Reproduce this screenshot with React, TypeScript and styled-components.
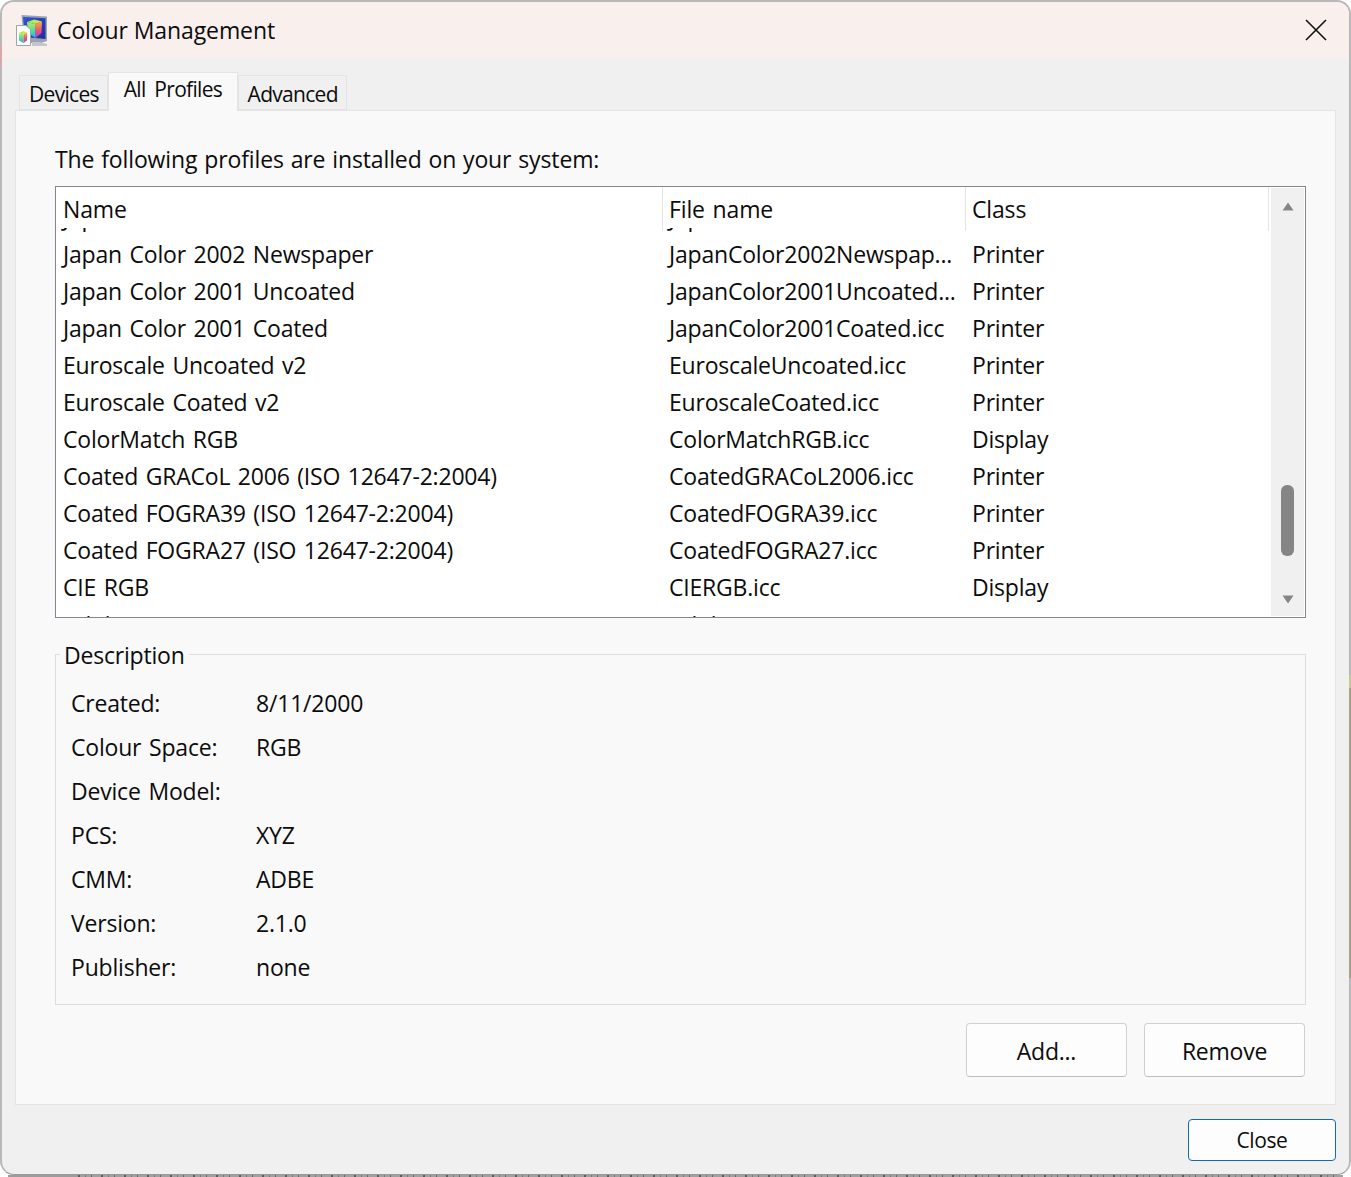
import React from "react";
import styled, { createGlobalStyle } from "styled-components";

const Global = createGlobalStyle`
  html, body { margin: 0; padding: 0; background: #fff; }
  body { font-family: "Open Sans", "Noto Sans", "Liberation Sans", sans-serif; color: #0c0c0c; }
  * { box-sizing: border-box; }
`;

const Stage = styled.div`
  width: 1351px;
  height: 1177px;
  overflow: hidden;
  background: #fff;
  position: relative;
  display: flex;
  flex-direction: column;
`;

const Window = styled.div`
  width: 1351px;
  height: 1175px;
  flex: none;
  border: 2px solid #b8b8b8;
  border-bottom: 1px solid #9a9a9a;
  border-radius: 14px;
  background: #f0f0f0;
  overflow: hidden;
  display: flex;
  flex-direction: column;
`;

const BehindStrip = styled.div`
  height: 2px;
  flex: none;
  margin: 0 8px;
  background:
    repeating-linear-gradient(90deg, #5c5c5c 0 2px, #a0a0a0 2px 7px, #7a7a7a 7px 8px, #a0a0a0 8px 13px, #666 13px 14px, #a0a0a0 14px 23px)
      70px 0 no-repeat,
    #9c9c9c;
`;

const EdgeMark = styled.div<{ $x: number; $y: number; $h: number; $c: string }>`
  position: absolute;
  left: ${(p) => p.$x}px;
  top: ${(p) => p.$y}px;
  width: 2px;
  height: ${(p) => p.$h}px;
  background: ${(p) => p.$c};
`;

const TitleBar = styled.div`
  height: 56px;
  flex: none;
  background: #f9f0ed;
  display: flex;
  align-items: center;
  padding: 0 22px 0 13px;
  gap: 9px;
`;

const TitleText = styled.div`
  font-size: 23px;
  letter-spacing: -0.1px;
  flex: 1;
`;

const CloseX = styled.button`
  width: 22px;
  height: 22px;
  padding: 0;
  border: 0;
  background: none;
  display: flex;
`;

const TabRow = styled.div`
  height: 52px;
  flex: none;
  display: flex;
  align-items: flex-end;
  padding-left: 17px;
  position: relative;
  z-index: 1;
`;

const Tab = styled.div<{ $active?: boolean }>`
  height: ${(p) => (p.$active ? "39px" : "35px")};
  padding: ${(p) => (p.$active ? "0 14.5px 6px 15px" : "2px 8px 0 9px")};
  margin-bottom: ${(p) => (p.$active ? "-1px" : "0")};
  background: ${(p) => (p.$active ? "#f9f9f9" : "#f0f0f0")};
  border: 1px solid #e4e4e4;
  border-bottom: ${(p) => (p.$active ? "0" : "1px solid #e4e4e4")};
  display: flex;
  align-items: center;
  font-size: 21px;
  letter-spacing: -0.7px;
  word-spacing: 4px;
`;

const Panel = styled.div`
  margin: 0 13px 0 13px;
  height: 995px;
  flex: none;
  background: #f9f9f9;
  border: 1px solid #e4e4e4;
  padding: 0 29px 0 39px;
  display: flex;
  flex-direction: column;
`;

const Intro = styled.div`
  height: 75px;
  flex: none;
  font-size: 23px;
  letter-spacing: -0.12px;
  word-spacing: 1px;
  line-height: 31px;
  padding-top: 33px;
`;

const ListBox = styled.div`
  height: 432px;
  flex: none;
  background: #fff;
  border: 1px solid #828790;
  display: flex;
  position: relative;
  overflow: hidden;
`;

const ListMain = styled.div`
  flex: 1;
  min-width: 0;
  display: flex;
  flex-direction: column;
`;

const HeaderRow = styled.div`
  height: 41px;
  flex: none;
  display: grid;
  grid-template-columns: 607px 303px 303px;
  background: #fff;
  position: relative;
  z-index: 1;
`;

const HeaderCell = styled.div<{ $first?: boolean }>`
  padding-left: ${(p) => (p.$first ? "7px" : "6px")};
  font-size: 23px;
  line-height: 44px;
  border-right: 1px solid #e5e5e5;
  letter-spacing: -0.15px;
  word-spacing: 2px;
`;

const RowsClip = styled.div`
  flex: 1;
  overflow: hidden;
`;

const Rows = styled.div`
  margin-top: -29px;
`;

const Row = styled.div`
  height: 37px;
  display: grid;
  grid-template-columns: 606px 303px 1fr;
  align-items: center;

  &:last-child {
    transform: translateY(1px);
  }
`;

const Cell = styled.div`
  padding-left: 7px;
  font-size: 23px;
  line-height: 37px;
  white-space: nowrap;
  letter-spacing: -0.2px;
  word-spacing: 1.8px;
`;

const ScrollBar = styled.div`
  width: 33px;
  flex: none;
  margin: 1px 1px 1px 0;
  background: #f0f0f0;
  position: relative;
`;

const Arrow = styled.svg<{ $top: number }>`
  position: absolute;
  left: 11px;
  top: ${(p) => p.$top}px;
`;

const Thumb = styled.div`
  position: absolute;
  left: 10px;
  top: 297px;
  width: 13px;
  height: 71px;
  border-radius: 6px;
  background: #858585;
`;

const Group = styled.div`
  margin-top: 36px;
  height: 351px;
  flex: none;
  border: 1px solid #dcdcdc;
  position: relative;
  padding: 26px 0 0 15px;
`;

const Legend = styled.div`
  position: absolute;
  left: 4px;
  top: -15px;
  padding: 0 4px;
  background: #f9f9f9;
  font-size: 23px;
  line-height: 30px;
  letter-spacing: -0.2px;
`;

const DescRow = styled.div`
  height: 44px;
  display: grid;
  grid-template-columns: 185px 1fr;
  align-items: center;
  font-size: 23px;
  letter-spacing: -0.2px;
  word-spacing: 2px;
`;

const PanelActions = styled.div`
  margin-top: 18px;
  display: flex;
  justify-content: flex-end;
  gap: 17px;
  padding-right: 1px;
`;

const ActionBtn = styled.button`
  width: 161px;
  height: 54px;
  background: #fdfdfd;
  border: 1px solid #d0d0d0;
  border-bottom-color: #bdbdbd;
  border-radius: 4px;
  font: inherit;
  font-size: 23px;
  letter-spacing: -0.25px;
  color: #0c0c0c;
  padding: 2px 0 0;
`;

const Footer = styled.div`
  flex: 1;
  display: flex;
  justify-content: flex-end;
  align-items: flex-start;
  padding: 14px 13px 0 0;
`;

const CloseBtn = styled.button`
  width: 148px;
  height: 42px;
  background: #fdfdfd;
  border: 1.5px solid #0f6cb0;
  border-radius: 4px;
  font: inherit;
  font-size: 21px;
  letter-spacing: -0.4px;
  color: #0c0c0c;
  padding: 0;
`;

const AppIcon = () => (
  <svg width="33" height="33" viewBox="0 0 33 33" aria-hidden="true">
    <defs>
      <linearGradient id="scr" x1="0" y1="0" x2="1" y2="1">
        <stop offset="0" stopColor="#2f55d8" />
        <stop offset="1" stopColor="#1a2f9c" />
      </linearGradient>
      <linearGradient id="top" x1="0" y1="0" x2="1" y2="0">
        <stop offset="0" stopColor="#8ee65a" />
        <stop offset="1" stopColor="#f4e24a" />
      </linearGradient>
      <linearGradient id="right" x1="0" y1="0" x2="0" y2="1">
        <stop offset="0" stopColor="#f7b23c" />
        <stop offset="0.55" stopColor="#f0507a" />
        <stop offset="1" stopColor="#b53ed0" />
      </linearGradient>
      <linearGradient id="left" x1="0" y1="0" x2="0" y2="1">
        <stop offset="0" stopColor="#b8ee58" />
        <stop offset="0.55" stopColor="#48e0a0" />
        <stop offset="1" stopColor="#36a8e8" />
      </linearGradient>
    </defs>
    <path d="M6.5 1 32 2.5 V27 L26 29 H9 Z" fill="#9aa3b4" />
    <path d="M8 3 30.5 4.2 V25 L10 23 Z" fill="url(#scr)" />
    <path d="M24 28 32 30 V32 H17 V28 Z" fill="#c3c6cc" />
    <path d="M12 8 19 5.5 27 7.5 20 10 Z" fill="url(#top)" />
    <path d="M20 10 27 7.5 26.5 19 20.5 24 Z" fill="url(#right)" />
    <path d="M12 8 20 10 20.5 24 13 19 Z" fill="url(#left)" />
    <path d="M1.5 11.5 H11 L15.5 15.5 V31.5 H1.5 Z" fill="#fdfdfd" stroke="#9fa3aa" />
    <path d="M4 19 8 17 12 18.5 8.5 20.5 Z" fill="url(#top)" />
    <path d="M4 19 8.5 20.5 V29 L4 26.5 Z" fill="url(#left)" />
    <path d="M8.5 20.5 12 18.5 V26.5 L8.5 29 Z" fill="url(#right)" />
  </svg>
);

const rows: [string, string, string][] = [
  ["Japan Web Coated", "JapanWebCoated.icc", ""],
  ["Japan Color 2002 Newspaper", "JapanColor2002Newspap...", "Printer"],
  ["Japan Color 2001 Uncoated", "JapanColor2001Uncoated...", "Printer"],
  ["Japan Color 2001 Coated", "JapanColor2001Coated.icc", "Printer"],
  ["Euroscale Uncoated v2", "EuroscaleUncoated.icc", "Printer"],
  ["Euroscale Coated v2", "EuroscaleCoated.icc", "Printer"],
  ["ColorMatch RGB", "ColorMatchRGB.icc", "Display"],
  ["Coated GRACoL 2006 (ISO 12647-2:2004)", "CoatedGRACoL2006.icc", "Printer"],
  ["Coated FOGRA39 (ISO 12647-2:2004)", "CoatedFOGRA39.icc", "Printer"],
  ["Coated FOGRA27 (ISO 12647-2:2004)", "CoatedFOGRA27.icc", "Printer"],
  ["CIE RGB", "CIERGB.icc", "Display"],
  ["Adobe RGB (1998)", "AdobeRGB1998.icc", ""],
];

const details: [string, string][] = [
  ["Created:", "8/11/2000"],
  ["Colour Space:", "RGB"],
  ["Device Model:", ""],
  ["PCS:", "XYZ"],
  ["CMM:", "ADBE"],
  ["Version:", "2.1.0"],
  ["Publisher:", "none"],
];

export default function App() {
  return (
    <Stage>
      <Global />
      <Window>
        <TitleBar>
          <AppIcon />
          <TitleText>Colour Management</TitleText>
          <CloseX aria-label="Close">
            <svg width="22" height="22" viewBox="0 0 22 22">
              <path d="M1 1 21 21 M21 1 1 21" stroke="#111" strokeWidth="1.6" fill="none" />
            </svg>
          </CloseX>
        </TitleBar>
        <TabRow>
          <Tab>Devices</Tab>
          <Tab $active>All Profiles</Tab>
          <Tab>Advanced</Tab>
        </TabRow>
        <Panel>
          <Intro>The following profiles are installed on your system:</Intro>
          <ListBox>
            <ListMain>
              <HeaderRow>
                <HeaderCell $first>Name</HeaderCell>
                <HeaderCell>File name</HeaderCell>
                <HeaderCell>Class</HeaderCell>
              </HeaderRow>
              <RowsClip>
                <Rows>
                  {rows.map((r) => (
                    <Row key={r[0]}>
                      <Cell>{r[0]}</Cell>
                      <Cell>{r[1]}</Cell>
                      <Cell>{r[2]}</Cell>
                    </Row>
                  ))}
                </Rows>
              </RowsClip>
            </ListMain>
            <ScrollBar>
              <Arrow $top={14} width="12" height="9" viewBox="0 0 12 9">
                <path d="M6 0.5 11.5 8.5 H0.5 Z" fill="#858585" />
              </Arrow>
              <Thumb />
              <Arrow $top={407} width="12" height="9" viewBox="0 0 12 9">
                <path d="M6 8.5 11.5 0.5 H0.5 Z" fill="#858585" />
              </Arrow>
            </ScrollBar>
          </ListBox>
          <Group>
            <Legend>Description</Legend>
            {details.map((d) => (
              <DescRow key={d[0]}>
                <span>{d[0]}</span>
                <span>{d[1]}</span>
              </DescRow>
            ))}
          </Group>
          <PanelActions>
            <ActionBtn>Add...</ActionBtn>
            <ActionBtn>Remove</ActionBtn>
          </PanelActions>
        </Panel>
        <Footer>
          <CloseBtn>Close</CloseBtn>
        </Footer>
      </Window>
      <BehindStrip />
      <EdgeMark $x={0} $y={44} $h={24} $c="#d8a9a9" />
      <EdgeMark $x={1349} $y={675} $h={13} $c="#c6c88c" />
      <EdgeMark $x={1349} $y={688} $h={290} $c="#a89f84" />
    </Stage>
  );
}
